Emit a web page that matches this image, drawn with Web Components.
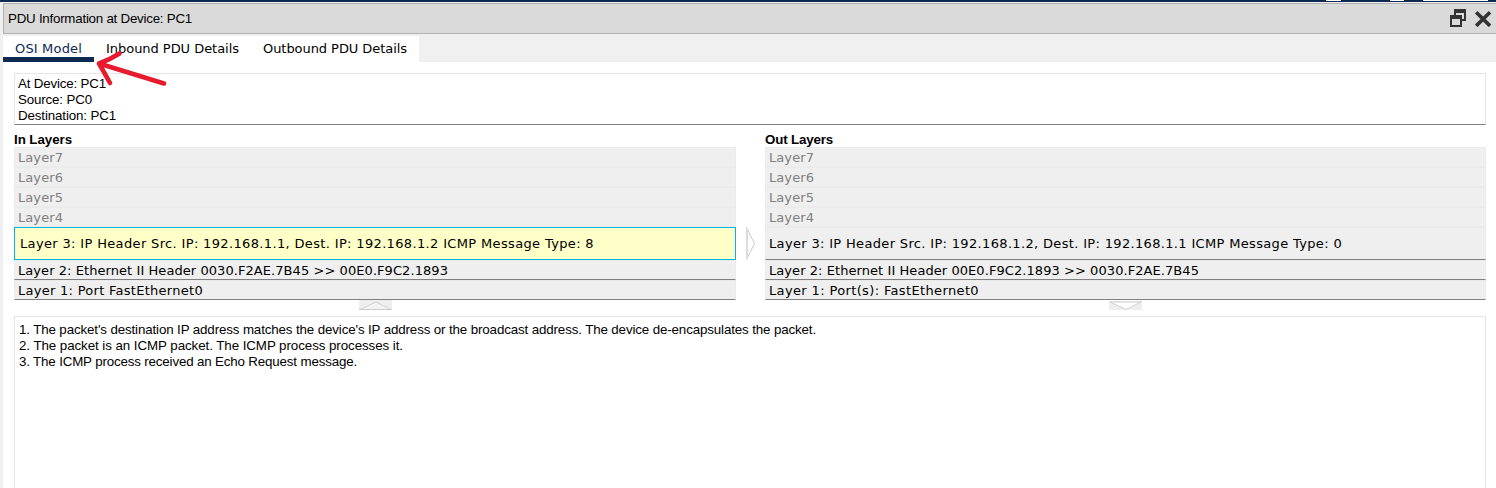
<!DOCTYPE html>
<html lang="en">
<head>
<meta charset="utf-8">
<title>PDU Information</title>
<style>
html,body{margin:0;height:100%;overflow:hidden;background:#fff}
</style>
</head>
<body>
<pdu-window>
  <title-bar slot="title"><fit-text w="184">PDU Information at Device: PC1</fit-text></title-bar>
  <tab-strip slot="tabs">
    <tab-item active style="width:91px"><fit-text w="67">OSI Model</fit-text></tab-item>
    <tab-item style="width:157px"><fit-text w="133">Inbound PDU Details</fit-text></tab-item>
    <tab-item style="width:168px"><fit-text w="144">Outbound PDU Details</fit-text></tab-item>
  </tab-strip>
  <text-panel class="info">
    <fit-text w="88">At Device: PC1</fit-text>
    <fit-text w="74">Source: PC0</fit-text>
    <fit-text w="98">Destination: PC1</fit-text>
  </text-panel>
  <layer-columns>
    <layer-list slot="in">
      <fit-text slot="heading" w="58">In Layers</fit-text>
      <layer-row off><fit-text w="45">Layer7</fit-text></layer-row>
      <layer-row off><fit-text w="45">Layer6</fit-text></layer-row>
      <layer-row off><fit-text w="45">Layer5</fit-text></layer-row>
      <layer-row off><fit-text w="45">Layer4</fit-text></layer-row>
      <layer-row tall selected><fit-text w="574">Layer 3: IP Header Src. IP: 192.168.1.1, Dest. IP: 192.168.1.2 ICMP Message Type: 8</fit-text></layer-row>
      <layer-row><fit-text w="430">Layer 2: Ethernet II Header 0030.F2AE.7B45 &gt;&gt; 00E0.F9C2.1893</fit-text></layer-row>
      <layer-row><fit-text w="185">Layer 1: Port FastEthernet0</fit-text></layer-row>
      <flow-arrow slot="arrow" dir="up"></flow-arrow>
    </layer-list>
    <flow-arrow slot="flow" dir="right"></flow-arrow>
    <layer-list slot="out">
      <fit-text slot="heading" w="68">Out Layers</fit-text>
      <layer-row off><fit-text w="45">Layer7</fit-text></layer-row>
      <layer-row off><fit-text w="45">Layer6</fit-text></layer-row>
      <layer-row off><fit-text w="45">Layer5</fit-text></layer-row>
      <layer-row off><fit-text w="45">Layer4</fit-text></layer-row>
      <layer-row tall><fit-text w="573">Layer 3: IP Header Src. IP: 192.168.1.2, Dest. IP: 192.168.1.1 ICMP Message Type: 0</fit-text></layer-row>
      <layer-row><fit-text w="430">Layer 2: Ethernet II Header 00E0.F9C2.1893 &gt;&gt; 0030.F2AE.7B45</fit-text></layer-row>
      <layer-row><fit-text w="210">Layer 1: Port(s): FastEthernet0</fit-text></layer-row>
      <flow-arrow slot="arrow" dir="down"></flow-arrow>
    </layer-list>
  </layer-columns>
  <text-panel class="notes">
    <fit-text w="797">1. The packet's destination IP address matches the device's IP address or the broadcast address. The device de-encapsulates the packet.</fit-text>
    <fit-text w="384">2. The packet is an ICMP packet. The ICMP process processes it.</fit-text>
    <fit-text w="338">3. The ICMP process received an Echo Request message.</fit-text>
  </text-panel>
</pdu-window>
<script>
const define = (name, html, ready) => customElements.define(name, class extends HTMLElement {
  connectedCallback() {
    if (this.shadowRoot) return;
    this.attachShadow({ mode: 'open' }).innerHTML = html;
    if (ready) ready(this);
  }
});

define('pdu-window', `<style>
:host{display:flex;flex-direction:column;position:relative;box-sizing:border-box;height:488px;width:1496px;overflow:hidden;
 font:13.33px/16px "Liberation Sans",Arial,sans-serif;color:#000;background:#fff}
.top{height:2px;flex:none;background:#0c2a52}
.top svg{display:block}
.frame{flex:1;min-height:0;display:flex;flex-direction:column;border-left:3px solid #f0f0f0}
.content{flex:1;min-height:0;display:flex;flex-direction:column;padding:11px 10px 0 11px}
::slotted(.info){height:52px;flex:none;--pad:2px 3px}
::slotted(.notes){flex:1;margin-top:6px;--pad:5px 4px;--bottom:#fff}
.note{position:absolute;left:90px;top:46px}
</style>
<div class="top"><svg width="1496" height="2"><g fill="#fff"><rect x="1326" width="15" height="1"/><rect x="1390" width="14" height="1"/><rect x="1423" width="65" height="1"/></g></svg></div>
<div class="frame"><slot name="title"></slot><slot name="tabs"></slot><div class="content"><slot></slot></div></div>
<svg class="note" width="80" height="44" fill="none" stroke="#e71a2e" stroke-width="4.600" stroke-linecap="round" stroke-linejoin="round"><path d="M74 37.500L9 17.500M29.500 7.500Q20 13.500 9 17.500Q14 26 20 37"/></svg>`);

define('title-bar', `<style>
:host{display:flex;align-items:center;box-sizing:border-box;height:32px;flex:none;border-top:1px solid #f0f0f0;padding:0;background:#dadada}
.bar{display:flex;flex:1;align-items:center;height:31px;box-sizing:border-box;border:1px solid #b1b1b1;border-right:0;padding:1px 4px 0 4px}
.gap{flex:1}
svg{display:block;margin-top:-2px}
</style><div class="bar"><slot></slot><span class="gap"></span>
<svg width="42" height="18" viewBox="0 0 42 18"><path fill="#333" fill-rule="evenodd" d="M4 0H16V12H12V18H0V6H4ZM6 4V6H12V10H14V4ZM2 10V16H10V10Z"/><path stroke="#333" stroke-width="3.600" d="M26.200 3.300L40 16.900M40 3.300L26.200 16.900"/></svg></div>`);

define('tab-strip', `<style>
:host{display:flex;height:26px;flex:none;background:#f0f0f0;border-top:2px solid #f0f0f0}
</style><slot></slot>`);

define('tab-item', `<style>
:host{display:block;box-sizing:border-box;height:26px;background:#fff;padding:5px 0 0 12px;font:13px/16px "DejaVu Sans",Verdana,sans-serif}
:host([active]){color:#0c2a52;border-bottom:5px solid #0c2a52}
</style><slot></slot>`);

define('text-panel', `<style>
:host{display:flex;flex-direction:column;align-items:flex-start;box-sizing:border-box;border:1px solid #e6e6e6;border-bottom-color:var(--bottom,#808080);padding:var(--pad);background:#fff}
</style><slot></slot>`);

define('layer-columns', `<style>
:host{display:grid;grid-template-columns:722px 29px 721px;height:185px;flex:none}
.mid{padding:102px 0 0 10px}
</style><slot name="in"></slot><div class="mid"><slot name="flow"></slot></div><slot name="out"></slot>`);

define('layer-list', `<style>
:host{display:flex;flex-direction:column}
.head{height:15px;padding-top:7px;font-weight:bold}
.arrow{display:flex;justify-content:center}
</style><div class="head"><slot name="heading"></slot></div><slot></slot><div class="arrow"><slot name="arrow"></slot></div>`);

define('layer-row', `<style>
:host{display:flex;align-items:center;box-sizing:border-box;height:20px;padding:1px 3px 0;background:#efefef;border:1px solid #ebebeb;border-bottom-color:#808080;font:13px/16px "DejaVu Sans",Verdana,sans-serif}
:host([off]){color:#808080;border-bottom-color:#ececec}
:host([tall]){height:33px}
:host([selected]){background:#ffffc8;border-color:#00b4e4;padding-left:5px}
</style><slot></slot>`);

define('flow-arrow', `<style>:host,svg{display:block}</style>`, el => {
  const art = {
    up: '<svg width="33" height="10"><rect width="33" height="10" fill="#eee"/><path d="M1 9.500L17 2L32 9.500" fill="#f3f3f3" stroke="#d2d2d2"/><path d="M0 9.500H33" stroke="#ccc"/></svg>',
    down: '<svg width="33" height="10"><rect y="1" width="33" height="9" fill="#eee"/><path d="M1 2L17 9.500L32 2Z" fill="#fff" stroke="#d2d2d2"/><path d="M0 1.500H33" stroke="#ddd"/></svg>',
    right: '<svg width="10" height="33"><path d="M.5.5L8.500 16.500L.5 32.500Z" fill="#fff" stroke="#ccc"/><path d="M1 1V32" stroke="#ddd" stroke-width="2"/></svg>'
  };
  el.shadowRoot.innerHTML += art[el.getAttribute('dir')];
});

/* One line of text, tracked to the width given in its w attribute. */
define('fit-text', `<style>:host{display:block;white-space:nowrap;width:max-content}</style><slot></slot>`, el => {
  const w = +el.getAttribute('w');
  const natural = el.getBoundingClientRect().width;
  if (w && natural) el.style.letterSpacing = ((w - natural) / el.textContent.length) + 'px';
});
</script>
</body>
</html>
